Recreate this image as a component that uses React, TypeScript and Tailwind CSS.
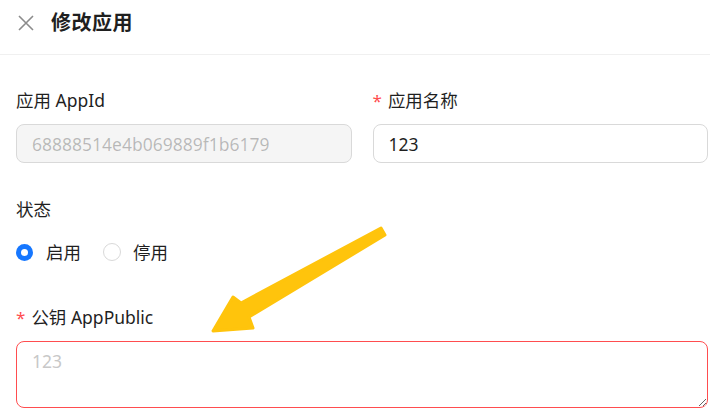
import React from "react";

const font = { fontFamily: '"Noto Sans", "Noto Sans CJK SC", sans-serif' };

export default function App() {
  return (
    <div
      className="relative w-[710px] h-[412px] overflow-hidden bg-white text-[#1f1f1f]"
      style={font}
    >
      {/* header */}
      <div className="h-[55px] border-b border-[#f0f0f0] flex items-center pl-[18px] pb-[15px] pt-[6px]">
        <svg width="16" height="16" viewBox="0 0 16 16" className="mr-[17px]">
          <path d="M1 1 L15 15 M15 1 L1 15" stroke="#8c8c8c" strokeWidth="1.6" fill="none" />
        </svg>
        <div className="text-[20px] font-bold leading-none tracking-[0.5px]">修改应用</div>
      </div>

      <div className="pl-4 pr-[2px] pt-[32px]">
        {/* row 1 */}
        <div className="grid grid-cols-2 gap-x-[21px] mb-[33px]">
          <div className="flex flex-col">
            <div className="h-[27px] text-[17.5px] leading-[27px] mb-[10px]">应用 AppId</div>
            <input
              disabled
              value="68888514e4b069889f1b6179"
              readOnly
              className="h-[39px] w-full rounded-[8px] border border-[#d9d9d9] bg-[#f5f5f5] px-[15px] text-[17.5px] text-[rgba(0,0,0,0.25)] outline-none"
              style={font}
            />
          </div>
          <div className="flex flex-col">
            <div className="h-[27px] text-[17.5px] leading-[27px] mb-[10px] flex items-center">
              <span className="text-[#ff4d4f] mr-[6px] text-[17px]">*</span>
              <span>应用名称</span>
            </div>
            <input
              value="123"
              readOnly
              className="h-[39px] w-full rounded-[8px] border border-[#d9d9d9] bg-white px-[15px] text-[17.5px] text-[#1f1f1f] outline-none"
              style={font}
            />
          </div>
        </div>

        {/* row 2 */}
        <div className="flex flex-col mb-[33px]">
          <div className="h-[27px] text-[17.5px] leading-[27px] mb-[10px]">状态</div>
          <div className="h-[38px] flex items-center text-[17.5px]">
            <div className="flex items-center mr-[22px]">
              <span className="w-[17px] h-[17px] rounded-full bg-[#1677ff] flex items-center justify-center mr-[13px]">
                <span className="w-[7px] h-[7px] rounded-full bg-white" />
              </span>
              <span>启用</span>
            </div>
            <div className="flex items-center">
              <span className="w-[18px] h-[18px] rounded-full border border-[#d9d9d9] bg-white mr-[12px]" />
              <span>停用</span>
            </div>
          </div>
        </div>

        {/* row 3 */}
        <div className="flex flex-col">
          <div className="h-[27px] text-[17.5px] leading-[27px] mb-[10px] flex items-center">
            <span className="text-[#ff4d4f] mr-[6px] text-[17px]">*</span>
            <span>公钥 AppPublic</span>
          </div>
          <textarea
            placeholder="123"
            className="h-[67px] w-full rounded-[8px] border border-[#ff4d4f] bg-white px-[15px] pt-[6px] text-[17.5px] leading-[27px] text-[#1f1f1f] placeholder:text-[#c8c8c8] outline-none"
            style={font}
          />
        </div>
      </div>

      {/* annotation arrow */}
      <svg
        className="absolute left-0 top-0 pointer-events-none"
        width="710"
        height="412"
        viewBox="0 0 710 412"
      >
        <polygon
          points="213,331 233,297 241,303 381,228 385,235 249,317 253,328"
          fill="#ffc40c"
          stroke="#ffc40c"
          strokeWidth="3"
          strokeLinejoin="round"
        />
      </svg>
    </div>
  );
}
